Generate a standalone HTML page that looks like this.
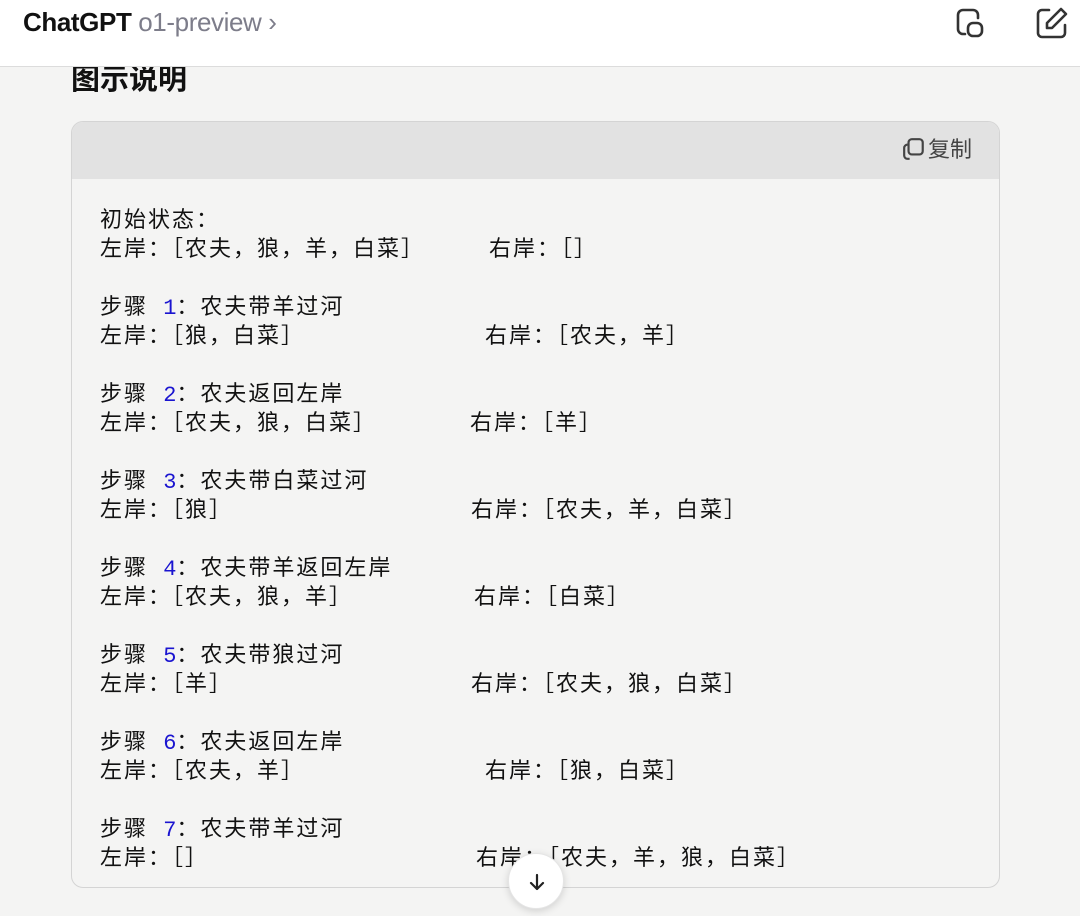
<!DOCTYPE html>
<html><head><meta charset="utf-8"><style>
*{margin:0;padding:0;box-sizing:border-box}
body{width:1080px;height:916px;background:#f4f4f3;position:relative;overflow:hidden;font-family:"Liberation Sans","Noto Sans CJK SC",sans-serif;color:#111}
.hdr{position:absolute;left:0;top:0;width:1080px;height:67px;background:#fff;border-bottom:1px solid #dcdcdc;z-index:5}
.t{position:absolute;left:23px;top:7px;font-size:26px;font-weight:bold;letter-spacing:-0.4px}
.t span{font-weight:normal;color:#7d7d8a}
h2{position:absolute;left:71px;top:56px;font-size:29px;font-weight:bold;font-family:"Noto Sans CJK SC",sans-serif}
.card{position:absolute;left:71px;top:121px;width:929px;height:767px;border:1.5px solid #d4d4d4;border-radius:12px;background:#f4f4f3;overflow:hidden}
.ch{height:57px;background:#e2e2e2;position:relative}
.copy{position:absolute;right:27px;top:10px;font-size:22px;color:#444;font-family:"Noto Sans CJK SC",sans-serif}
.l{position:absolute;font-size:22px;line-height:29px;white-space:pre;font-family:"Noto Sans CJK SC",sans-serif;letter-spacing:2px}
.n{color:#1a14d0;font-family:"Liberation Mono",monospace;letter-spacing:0}
.s{font-family:"Liberation Mono",monospace}
.btn{position:absolute;left:508px;top:853px;width:56px;height:56px;border-radius:50%;background:#fff;box-shadow:0 2px 8px rgba(0,0,0,.15);border:1px solid #e5e5e5;z-index:6}
</style></head><body>
<div class="hdr">
<div class="t">ChatGPT <span>o1-preview ›</span></div>
<svg style="position:absolute;left:954px;top:6px" width="34" height="34" viewBox="0 0 34 34" fill="none" stroke="#333" stroke-width="2.6" stroke-linecap="round"><path d="M11 28H9a5 5 0 0 1-5-5V9a5 5 0 0 1 5-5h10a5 5 0 0 1 5 5v3"/><rect x="14" y="17" width="14" height="13" rx="5"/></svg>
<svg style="position:absolute;left:1034px;top:5px" width="36" height="36" viewBox="0 0 36 36" fill="none" stroke="#333" stroke-width="2.6" stroke-linecap="round" stroke-linejoin="round"><path d="M15 5H8a4 4 0 0 0-4 4v19a4 4 0 0 0 4 4h19a4 4 0 0 0 4-4v-8"/><path d="M27 4l5 5-14 14h-5v-5z"/></svg>
</div>
<h2>图示说明</h2>
<div class="card"><div class="ch"><div class="copy"><svg width="24" height="24" viewBox="0 0 22 22" fill="none" stroke="#444" stroke-width="2" style="vertical-align:-4px;margin-right:2px"><path d="M7 20H5a3 3 0 0 1-3-3V10a3 3 0 0 1 3-3"/><rect x="6" y="2" width="13" height="14" rx="3"/></svg>复制</div></div></div>
<div class="l" style="left:100px;top:204px">初始状态：</div>
<div class="l" style="left:100px;top:233px">左岸：［农夫，狼，羊，白菜］</div><div class="l" style="left:489px;top:233px">右岸：［］</div>

<div class="l" style="left:100px;top:291px">步骤<span class="s"> </span><span class="n">1</span>：农夫带羊过河</div>
<div class="l" style="left:100px;top:320px">左岸：［狼，白菜］</div><div class="l" style="left:485px;top:320px">右岸：［农夫，羊］</div>

<div class="l" style="left:100px;top:378px">步骤<span class="s"> </span><span class="n">2</span>：农夫返回左岸</div>
<div class="l" style="left:100px;top:407px">左岸：［农夫，狼，白菜］</div><div class="l" style="left:470px;top:407px">右岸：［羊］</div>

<div class="l" style="left:100px;top:465px">步骤<span class="s"> </span><span class="n">3</span>：农夫带白菜过河</div>
<div class="l" style="left:100px;top:494px">左岸：［狼］</div><div class="l" style="left:471px;top:494px">右岸：［农夫，羊，白菜］</div>

<div class="l" style="left:100px;top:552px">步骤<span class="s"> </span><span class="n">4</span>：农夫带羊返回左岸</div>
<div class="l" style="left:100px;top:581px">左岸：［农夫，狼，羊］</div><div class="l" style="left:474px;top:581px">右岸：［白菜］</div>

<div class="l" style="left:100px;top:639px">步骤<span class="s"> </span><span class="n">5</span>：农夫带狼过河</div>
<div class="l" style="left:100px;top:668px">左岸：［羊］</div><div class="l" style="left:471px;top:668px">右岸：［农夫，狼，白菜］</div>

<div class="l" style="left:100px;top:726px">步骤<span class="s"> </span><span class="n">6</span>：农夫返回左岸</div>
<div class="l" style="left:100px;top:755px">左岸：［农夫，羊］</div><div class="l" style="left:485px;top:755px">右岸：［狼，白菜］</div>

<div class="l" style="left:100px;top:813px">步骤<span class="s"> </span><span class="n">7</span>：农夫带羊过河</div>
<div class="l" style="left:100px;top:842px">左岸：［］</div><div class="l" style="left:476px;top:842px">右岸：［农夫，羊，狼，白菜］</div>
<div class="btn"><svg style="position:absolute;left:17px;top:17px" width="22" height="22" viewBox="0 0 22 22" fill="none" stroke="#222" stroke-width="2.2" stroke-linecap="round" stroke-linejoin="round"><path d="M11 4v14M5 12l6 6 6-6"/></svg></div>
</body></html>
